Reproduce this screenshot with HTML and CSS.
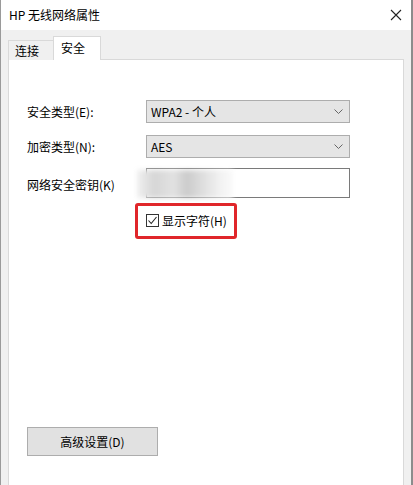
FILE: index.html
```html
<!DOCTYPE html>
<html lang="zh-CN">
<head>
<meta charset="utf-8">
<title>HP 无线网络属性</title>
<link rel="stylesheet" href="styles.css">
</head>
<body>
<div class="window">
  <div class="titlebar">
    <span class="title">HP 无线网络属性</span>
    <svg class="close" width="12" height="12" viewBox="0 0 12 12"><path d="M1 1L11 11M11 1L1 11" stroke="#222" stroke-width="1.1" fill="none"/></svg>
  </div>
  <div class="body">
    <div class="tabs">
      <div class="tab">连接</div>
      <div class="tab active">安全</div>
    </div>
    <div class="panel">
      <div class="form">
        <label class="label">安全类型(E):</label>
        <div class="select"><span>WPA2 - 个人</span><svg width="9" height="5" viewBox="0 0 9 5"><path d="M0.5 0.5L4.5 4.5L8.5 0.5" stroke="#666" stroke-width="1" fill="none"/></svg></div>
        <label class="label">加密类型(N):</label>
        <div class="select"><span>AES</span><svg width="9" height="5" viewBox="0 0 9 5"><path d="M0.5 0.5L4.5 4.5L8.5 0.5" stroke="#666" stroke-width="1" fill="none"/></svg></div>
        <label class="label">网络安全密钥(K)</label>
        <div class="input"><div class="blur"></div></div>
        <div></div>
        <div class="highlight">
          <span class="check"><svg width="11" height="11" viewBox="0 0 11 11"><path d="M1.5 5.5L4.2 8.5L9.5 2" stroke="#222" stroke-width="1.1" fill="none"/></svg></span>
          <span>显示字符(H)</span>
        </div>
      </div>
      <button class="btn">高级设置(D)</button>
    </div>
  </div>
</div>
</body>
</html>
```

FILE: styles.css
```css
html, body {
  margin: 0;
  padding: 0;
}
body {
  width: 413px;
  height: 485px;
  overflow: hidden;
  font-family: "Noto Sans CJK SC", "Noto Sans", sans-serif;
  font-size: 12px;
  color: #000;
  background: #f0f0f0;
}
.window {
  box-sizing: border-box;
  width: 413px;
  height: 485px;
  display: flex;
  flex-direction: column;
  border-left: 1px solid #9a9a9a;
  border-right: 2px solid #8c8c8c;
}
.titlebar {
  height: 30px;
  flex: none;
  background: #fff;
  display: flex;
  align-items: center;
  justify-content: space-between;
  padding: 0 9px 0 8px;
}
.title {
  line-height: 16px;
  margin-top: -1px;
}
.body {
  flex: 1;
  background: #f0f0f0;
  display: flex;
  flex-direction: column;
  padding: 7px 7px 0 7px;
}
.tabs {
  display: flex;
  align-items: flex-end;
  height: 23px;
  position: relative;
  z-index: 1;
  margin-bottom: -1px;
}
.tab {
  box-sizing: border-box;
  width: 46px;
  height: 20px;
  border: 1px solid #d9d9d9;
  border-bottom: none;
  background: #f0f0f0;
  padding-left: 6px;
  line-height: 19px;
}
.tab.active {
  width: 48px;
  height: 24px;
  margin-left: -1px;
  background: #fff;
  padding-left: 7px;
  line-height: 22px;
}
.panel {
  flex: 1;
  background: #fff;
  border: 1px solid #d9d9d9;
  border-bottom: none;
  padding: 40px 0 0 18px;
  display: flex;
  flex-direction: column;
}
.form {
  display: grid;
  grid-template-columns: 119px 204px;
  row-gap: 12px;
  align-items: center;
}
.select {
  box-sizing: border-box;
  height: 23px;
  background: #e5e5e5;
  border: 1px solid #adadad;
  display: flex;
  align-items: center;
  justify-content: space-between;
  padding: 0 6px 0 4px;
}
.input {
  box-sizing: border-box;
  height: 30px;
  margin-top: -2px;
  background: #fff;
  border: 1px solid #7a7a7a;
  position: relative;
  overflow: visible;
}
.blur {
  position: absolute;
  left: -10px;
  top: 1px;
  width: 96px;
  height: 28px;
  background: linear-gradient(90deg, #f0f0f0 0%, #d6d6d6 18%, #e2e2e2 38%, #cbcbcb 52%, #dedede 68%, #f3f3f3 88%, #fafafa 100%);
  filter: blur(2.5px);
}
.highlight {
  box-sizing: border-box;
  width: 102px;
  height: 36px;
  margin: -7px 0 0 -11px;
  border: 3px solid #e0262a;
  border-radius: 3px;
  display: flex;
  align-items: center;
  gap: 3px;
  padding: 0 0 1px 8px;
}
.check {
  box-sizing: border-box;
  width: 13px;
  height: 13px;
  border: 1px solid #333;
  background: #fff;
  display: flex;
  align-items: center;
  justify-content: center;
}
.btn {
  box-sizing: border-box;
  width: 131px;
  height: 29px;
  margin-top: 188px;
  background: #e1e1e1;
  border: 1px solid #adadad;
  font-family: inherit;
  font-size: 12px;
  color: #000;
  padding: 0;
}
```
